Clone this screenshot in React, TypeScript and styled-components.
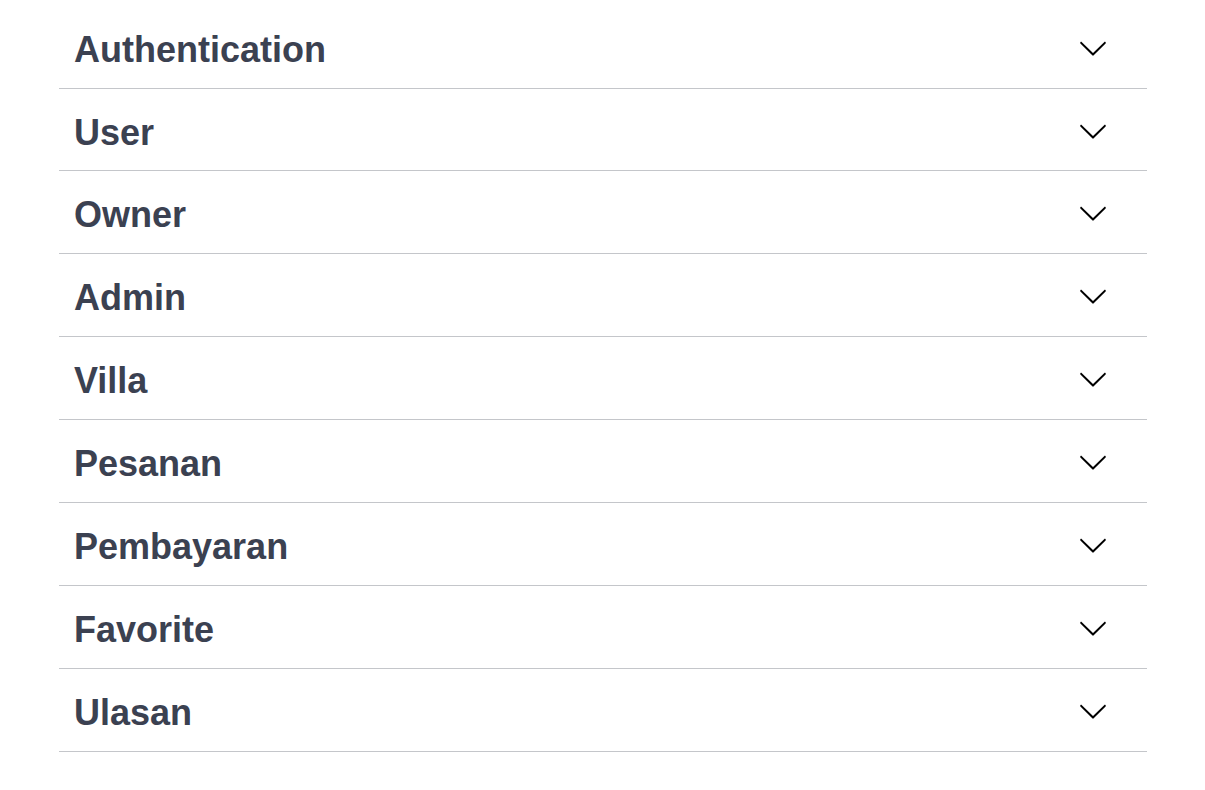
import React from "react";
import styled, { createGlobalStyle } from "styled-components";

const Global = createGlobalStyle`
  html, body { margin: 0; padding: 0; background: #ffffff; }
  body { font-family: "Liberation Sans", Arial, sans-serif; }
`;

const Wrapper = styled.div`
  padding: 6px 0 0 59px;
`;

const List = styled.div`
  width: 1088px;
  display: flex;
  flex-direction: column;
`;

const TagRow = styled.h3`
  box-sizing: border-box;
  height: 83px;
  margin: 0;
  padding: 23px 39px 0 15px;
  display: flex;
  align-items: flex-start;
  border-bottom: 1px solid rgba(59, 65, 81, 0.3);
  font-family: "Liberation Sans", Arial, sans-serif;
  font-size: 36px;
  font-weight: 700;
  color: #3b4151;
  line-height: 1.15;
  cursor: pointer;

  &:nth-child(2) {
    height: 82px;
  }
`;

const TagName = styled.span`
  flex: 1;
`;

const Arrow = styled.svg`
  width: 30px;
  height: 30px;
  margin-top: 3.5px;
  flex-shrink: 0;
`;

const tags = [
  "Authentication",
  "User",
  "Owner",
  "Admin",
  "Villa",
  "Pesanan",
  "Pembayaran",
  "Favorite",
  "Ulasan",
];

export default function App() {
  return (
    <>
      <Global />
      <Wrapper>
        <List>
          {tags.map((t) => (
            <TagRow key={t}>
              <TagName>{t}</TagName>
              <Arrow viewBox="0 0 20 20" aria-hidden="true">
                <path
                  fill="#000"
                  d="M17.418 6.109c.272-.268.709-.268.979 0s.271.701 0 .969l-7.908 7.83c-.27.268-.707.268-.979 0l-7.908-7.83c-.27-.268-.27-.701 0-.969.271-.268.709-.268.979 0L10 13.25l7.418-7.141z"
                />
              </Arrow>
            </TagRow>
          ))}
        </List>
      </Wrapper>
    </>
  );
}
